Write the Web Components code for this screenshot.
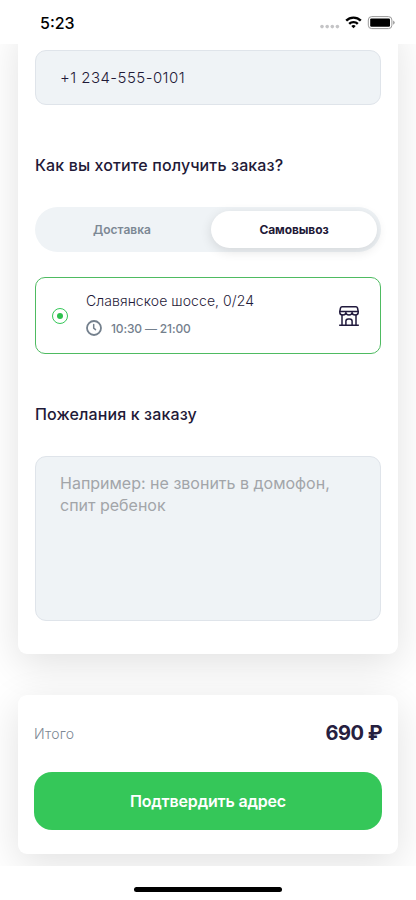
<!DOCTYPE html>
<html lang="ru">
<head>
<meta charset="utf-8">
<title>Оформление заказа</title>
<style>
html,body{margin:0;background:#fff}
body{width:416px;height:900px;overflow:hidden;font-family:Inter,"Noto Sans",sans-serif;color:#1f1a38}
</style>
</head>
<body>
<order-screen></order-screen>
<script>
const define = (name, html) => customElements.define(name, class extends HTMLElement {
  constructor() {
    super();
    const t = document.createElement('template');
    t.innerHTML = html;
    this.attachShadow({mode: 'open'}).append(t.content.cloneNode(true));
  }
});

define('status-bar', `<style>
:host{display:flex;height:44px;box-sizing:border-box;padding:0 21px 0 40px;justify-content:space-between;background:#fff;color:#000}
.time{font-size:16px;line-height:20px;font-weight:500;margin-top:13px}
svg{display:block}
</style>
<span class="time">5:23</span>
<svg width="75" height="44" viewBox="0 0 75 44">
<g fill="#c4c4c6"><circle cx="2" cy="26.6" r="1.8"/><circle cx="7.2" cy="26.6" r="1.8"/><circle cx="12.3" cy="26.6" r="1.8"/><circle cx="17.4" cy="26.6" r="1.8"/></g>
<g fill="none" stroke="#000" stroke-width="2.4"><path d="M26.2 20.7a10.3 10.3 0 0 1 14.6 0"/><path d="M29.2 23.9a6 6 0 0 1 8.6 0"/></g>
<path d="M31.3 26a3.2 3.2 0 0 1 4.4 0l-2.2 2.3z"/>
<rect x="48.3" y="16.6" width="23.6" height="12" rx="3.4" fill="none" stroke="#999"/>
<rect x="50.2" y="18.4" width="19.8" height="8.4" rx="1.2"/>
<path d="M73.1 20.4q1.6.7 1.6 2.2t-1.6 2.2z" fill="#999"/>
</svg>`);

define('surface-card', `<style>
:host{display:block;box-sizing:border-box;margin:0 18px;background:#fff;border-radius:9px;box-shadow:0 10px 40px rgba(0,0,0,.12)}
</style><slot></slot>`);

define('section-title', `<style>
:host{display:block;font-size:16px;line-height:24px;font-weight:550;letter-spacing:.12px;white-space:nowrap}
</style><slot></slot>`);

define('form-field', `<style>
:host{display:block;box-sizing:border-box;background:#eff3f6;border:1px solid #dfe4ea;border-radius:11px;padding:0 24px;white-space:nowrap}
</style><slot></slot>`);

define('segmented-control', `<style>
:host{display:flex;box-sizing:border-box;height:45px;padding:4px;border-radius:23px;background:#eff3f6;font-size:12px;font-weight:600;line-height:37px;text-align:center}
.off{flex:1;color:#7c8894;padding-right:6px}
b{width:166px;height:37px;letter-spacing:-.1px;font-weight:700;background:#fff;border-radius:19px;box-shadow:0 3px 12px rgba(0,0,0,.12)}
</style><span class="off"><slot name="first"></slot></span><b><slot name="second"></slot></b>`);

define('radio-dot', `<style>:host,svg{display:block;width:16px;height:16px}</style>
<svg viewBox="0 0 16 16"><circle cx="8" cy="8" r="7.5" fill="#fff" stroke="#35c759"/><circle cx="8" cy="8" r="3" fill="#2dc04e"/></svg>`);

define('clock-icon', `<style>:host,svg{display:block;width:16px;height:16px}</style>
<svg viewBox="0 0 16 16" fill="none" stroke="#74808d" stroke-linecap="round"><circle cx="8" cy="8" r="7" stroke-width="1.8"/><path d="M7.7 4.4V8.2L9.5 9.6" stroke-width="1.5"/></svg>`);

define('store-icon', `<style>:host,svg{display:block;width:20px;height:20px}</style>
<svg viewBox="0 0 20 20" fill="none" stroke="#211a3d" stroke-width="1.5" stroke-linecap="round" stroke-linejoin="round">
<path d="M3 .8H17Q18.1.8 18.5 2L19.2 5.4H.8L1.5 2Q1.9.8 3 .8Z"/>
<path d="M.8 5.4V6.5A3 2.5 0 0 0 6.9 6.5A3.1 2.4 0 0 0 13.1 6.5A3 2.5 0 0 0 19.2 6.5V5.4"/>
<path d="M3 9V19M17 9V19M.7 19.2H19.3M6.9 19V15.2Q6.9 12.9 9.2 12.9H10.8Q13.1 12.9 13.1 15.2V19"/>
</svg>`);

define('pickup-option', `<style>
:host{display:flex;box-sizing:border-box;height:77px;border:1px solid #4ebb61;border-radius:10px;padding:0 21px 0 16px;align-items:center}
.info{flex:1;margin:0 0 2px 18px}
.address{font-size:14px;line-height:20px;font-weight:350;letter-spacing:.07px;white-space:nowrap}
.hours{display:flex;align-items:center;gap:9px;margin-top:7px;height:20px;font-size:12px;font-weight:500;letter-spacing:-.15px;color:#74808d;white-space:nowrap}
</style>
<radio-dot></radio-dot>
<div class="info"><div class="address"><slot name="address"></slot></div>
<div class="hours"><clock-icon></clock-icon><slot name="hours"></slot></div></div>
<store-icon></store-icon>`);

define('total-row', `<style>
:host{display:flex;height:28px;align-items:center;justify-content:space-between;font-size:14px;color:#7c8894}
span{font-weight:350;letter-spacing:.2px}
b{font-size:20px;letter-spacing:-.5px;font-weight:700;color:#26203f}
</style><span><slot name="label"></slot></span><b><slot name="amount"></slot></b>`);

define('primary-button', `<style>
:host{display:block}
button{display:block;width:100%;height:58px;padding:0;border:0;border-radius:18px;background:#35c759;color:#fff;font:600 16px Inter,"Noto Sans",sans-serif;letter-spacing:-.17px}
</style><button><slot></slot></button>`);

define('home-indicator', `<style>
:host{display:flex;height:34px;justify-content:center;background:#fff}
i{width:148px;height:5px;margin-top:21px;border-radius:3px;background:#000}
</style><i></i>`);

define('order-screen', `<style>
:host{display:flex;flex-direction:column;width:416px;height:900px}
main{height:822px;overflow:hidden}
.form{height:630px;margin-top:-20px;padding:26px 17px 0}
.total{position:relative;height:159px;margin-top:41px;padding:24px 16px 0}
.phone{height:55px;font-size:15px;line-height:54px;font-weight:350;letter-spacing:.45px}
.receive{margin-top:48px}
segmented-control{margin-top:30px}
pickup-option{margin-top:25px}
.wishes{margin-top:48px}
.note{height:165px;margin-top:30px;padding-top:15px;font-size:16px;line-height:22px;color:#a2a5a9}
primary-button{margin-top:25px}
</style>
<status-bar></status-bar>
<main>
<surface-card class="form">
<form-field class="phone">+1 234-555-0101</form-field>
<section-title class="receive">Как вы хотите получить заказ?</section-title>
<segmented-control><span slot="first">Доставка</span><span slot="second">Самовывоз</span></segmented-control>
<pickup-option><span slot="address">Славянское шоссе, 0/24</span><span slot="hours">10:30 — 21:00</span></pickup-option>
<section-title class="wishes">Пожелания к заказу</section-title>
<form-field class="note">Например: не звонить в домофон,<br>спит ребенок</form-field>
</surface-card>
<surface-card class="total">
<total-row><span slot="label">Итого</span><span slot="amount">690 ₽</span></total-row>
<primary-button>Подтвердить адрес</primary-button>
</surface-card>
</main>
<home-indicator></home-indicator>`);
</script>
</body>
</html>
